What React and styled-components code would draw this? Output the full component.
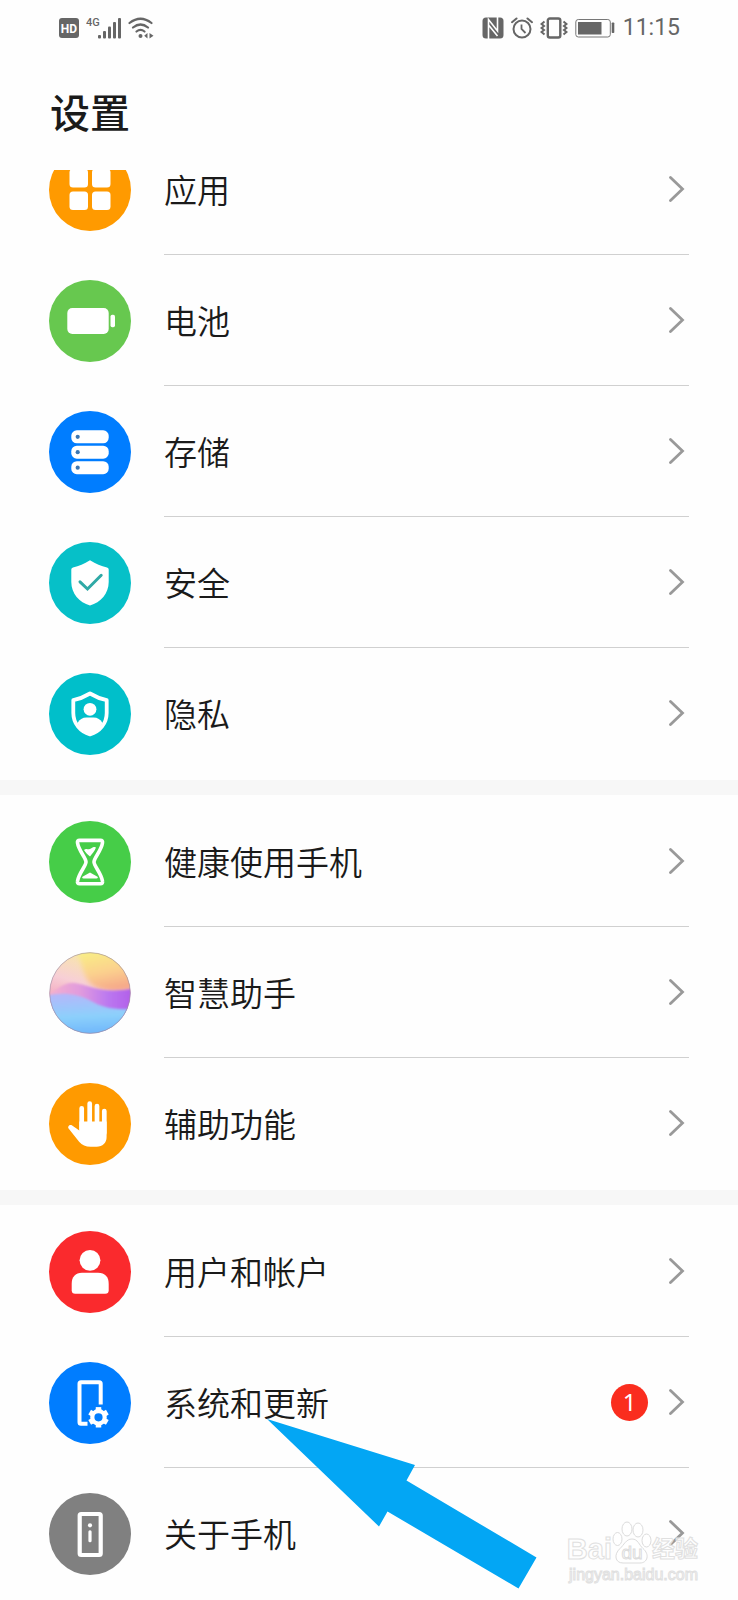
import React from 'react'
import styled, { createGlobalStyle } from 'styled-components'

const GlobalStyle = createGlobalStyle`
  * {
    box-sizing: border-box;
  }
  body {
    margin: 0;
    background: #fefefe;
    font-family: 'Noto Sans CJK SC', 'Noto Sans', sans-serif;
    color: #1a1a1a;
  }
`

const Page = styled.div`
  overflow: hidden;
`

const StatusBar = styled.div`
  display: flex;
  justify-content: space-between;
  align-items: center;
  height: 56px;
  padding: 0 58px;
  color: #666;
`

const StatusGroup = styled.div`
  display: flex;
  align-items: center;
  gap: ${props => props.gap}px;
`

const Clock = styled.time`
  font-family: Roboto, sans-serif;
  font-size: 23px;
  line-height: 24px;
`

const Title = styled.h1`
  margin: 0;
  height: 114px;
  padding: 25px 50px 0;
  font-size: 40px;
  line-height: 60px;
  font-weight: 500;
`

// the list is scrolled a little, so its first row is cut by the header
const ScrollArea = styled.main`
  overflow: hidden;
`

const Scrolled = styled.div`
  margin-top: -47px;
`

const Group = styled.ul`
  list-style: none;
  margin: 0;
  padding: 1px 0;

  & + & {
    border-top: 15px solid #f7f7f7;
  }
`

const Item = styled.li`
  position: relative;
`

const Row = styled.a`
  display: flex;
  align-items: center;
  gap: 33px;
  height: 131px;
  padding: 0 49px;
  color: inherit;
  text-decoration: none;
`

const Body = styled.div`
  flex: 1;
  display: flex;
  align-items: center;
  height: 100%;
  padding-right: 4px;
  border-bottom: 1px solid ${props => (props.$last ? 'transparent' : '#d0d0d0')};
`

const Label = styled.span`
  flex: 1;
  font-size: 33px;
  line-height: 36px;
  font-weight: 350;
`

const Badge = styled.span`
  display: flex;
  justify-content: center;
  align-items: center;
  width: 37px;
  height: 37px;
  margin-right: 21px;
  border-radius: 50%;
  background: #fa2d1e;
  color: white;
  font-family: 'Noto Sans', sans-serif;
  font-size: 24px;
  line-height: 32px;
`

const Pointer = styled.svg`
  position: absolute;
  z-index: 2;
  left: 266px;
  top: 81px;
`

const Watermark = styled.div`
  position: absolute;
  z-index: 1;
  right: 40px;
  bottom: 14px;
  color: rgba(255, 255, 255, 0.6);
  -webkit-text-stroke: 1px #e0e0e0;
`

const Brand = styled.div`
  display: flex;
  align-items: flex-end;
  font-family: 'Liberation Sans', 'Noto Sans CJK SC', sans-serif;
  line-height: 32px;
`

const BrandName = styled.span`
  font-size: ${props => (props.$cjk ? 23 : 29)}px;
  font-weight: bold;
`

const Site = styled.div`
  font-family: 'Liberation Sans', sans-serif;
  font-size: 16px;
  line-height: 20px;
  text-align: right;
`

const Disc = ({ color, children }) => (
  <svg width="82" height="82" viewBox="0 0 82 82" fill="#fff" aria-hidden="true">
    <circle cx="41" cy="41" r="41" fill={color} />
    {children}
  </svg>
)

const AppsIcon = () => (
  <Disc color="#ff9a00">
    <rect x="20.5" y="20" width="18.5" height="18.5" rx="3.5" />
    <rect x="43" y="20" width="18.5" height="18.5" rx="3.5" />
    <rect x="20.5" y="42.5" width="18.5" height="18.5" rx="3.5" />
    <rect x="43" y="42.5" width="18.5" height="18.5" rx="3.5" />
  </Disc>
)

const BatteryIcon = () => (
  <Disc color="#67c84f">
    <rect x="18.3" y="28" width="41.4" height="26" rx="5" />
    <rect x="61.5" y="34.7" width="4.5" height="12.6" rx="1.8" />
  </Disc>
)

const StorageIcon = () => (
  <Disc color="#007dff">
    {[19.3, 34.7, 50.2].map(y => (
      <g key={y}>
        <rect x="22.3" y={y} width="37.4" height="13" rx="5.5" />
        <circle cx="28.7" cy={y + 6.5} r="2.1" fill="#3a76b4" />
      </g>
    ))}
  </Disc>
)

const SecurityIcon = () => (
  <Disc color="#06c0c8">
    <path d="M41 18.3C47 21.9 52 24.3 58 25.5Q59.7 25.9 59.7 27.5V40C59.7 51.5 51.7 60.5 41 63.4 30.3 60.5 22.3 51.5 22.3 40V27.5Q22.3 25.9 24 25.5C30 24.3 35 21.9 41 18.3z" />
    <path
      d="M31 39.8L38.5 47 52.2 33.3"
      fill="none"
      stroke="#2fa9a6"
      strokeWidth="3"
      strokeLinecap="round"
    />
  </Disc>
)

const PrivacyIcon = () => (
  <Disc color="#00bfca">
    <path
      d="M41 20.5C46.5 23.8 51.5 25.9 57.7 27.2V40C57.7 50.5 50.7 58.5 41 61.4 31.3 58.5 24.3 50.5 24.3 40V27.2C30.5 25.9 35.5 23.8 41 20.5z"
      fill="none"
      stroke="#fff"
      strokeWidth="3.8"
      strokeLinejoin="round"
    />
    <circle cx="41" cy="36.3" r="6.4" />
    <path d="M28.5 50q3-5.5 9-5.5h7q6 0 9 5.5-4.5 8.5-12.5 11.5-8-3-12.5-11.5z" />
  </Disc>
)

const HourglassIcon = () => (
  <Disc color="#46cd48">
    <path
      d="M30.5 19.4h21q2.400 0 2 2.400C52.5 29.5 45 37 45 41s7.5 11.5 8.5 19.2q.4 2.5-2 2.5h-21q-2.4 0-2-2.5C29.5 52.5 37 45 37 41s-7.5-11.5-8.5-19.2q-.4-2.4 2-2.4z"
      fill="none"
      stroke="#fff"
      strokeWidth="3.6"
    />
    <path d="M35 29c3-2.5 4 .5 7-1.5s4-1.5 5-1c-1.5 4-4 6.5-6 9-2.5-2-4.5-4-6-6.5z" />
    <path d="M41 51.5l7.5 4.3q1 1.7-1 1.7h-13q-2 0-1-1.7z" />
  </Disc>
)

const AssistantIcon = () => (
  <svg width="82" height="82" viewBox="0 0 82 82" aria-hidden="true">
    <defs>
      <clipPath id="orb">
        <circle cx="41" cy="41" r="40.5" />
      </clipPath>
      <filter id="orbSoft">
        <feGaussianBlur stdDeviation="2.5" />
      </filter>
      <filter id="orbEdge">
        <feGaussianBlur stdDeviation="0.8" />
      </filter>
      <linearGradient id="orbPink" x1="0.4" y1="0" x2="0.2" y2="0.7">
        <stop offset="0" stopColor="#f8e7a8" />
        <stop offset="0.5" stopColor="#f7cfd6" />
        <stop offset="1" stopColor="#f29cb8" />
      </linearGradient>
      <linearGradient id="orbGold" x1="0.4" y1="0" x2="0.7" y2="1">
        <stop offset="0" stopColor="#f8f284" />
        <stop offset="0.55" stopColor="#fbd08e" />
        <stop offset="1" stopColor="#f5a088" />
      </linearGradient>
      <linearGradient id="orbViolet" x1="0" y1="0" x2="1" y2="0">
        <stop offset="0" stopColor="#f6b4cc" />
        <stop offset="0.4" stopColor="#e09ade" />
        <stop offset="0.7" stopColor="#bb78f0" />
        <stop offset="1" stopColor="#b15ce8" />
      </linearGradient>
      <linearGradient id="orbBlue" x1="0.4" y1="0" x2="0.5" y2="1">
        <stop offset="0" stopColor="#b4b8fa" />
        <stop offset="0.45" stopColor="#8cd0fb" />
        <stop offset="1" stopColor="#5fa8fb" />
      </linearGradient>
    </defs>
    <g clipPath="url(#orb)">
      <rect width="82" height="82" fill="url(#orbPink)" />
      <path
        d="M24-6C34 6 32 20 40 30s26 12 50 6V-6z"
        fill="url(#orbGold)"
        filter="url(#orbSoft)"
      />
      <path
        d="M-4 44C8 38 14 30 25 31c16 2 28 12 61 5v30H-4z"
        fill="url(#orbViolet)"
        filter="url(#orbEdge)"
      />
      <path
        d="M-8 46c14-6 34-6 50 3 12 7 26 10 50 7v36H-8z"
        fill="url(#orbBlue)"
        filter="url(#orbEdge)"
      />
    </g>
    <circle cx="41" cy="41" r="40.3" fill="none" stroke="#9a8aa0" strokeOpacity="0.6" />
  </svg>
)

const HandIcon = () => (
  <Disc color="#ff9a00">
    <g stroke="#fff" strokeWidth="4.7" strokeLinecap="round">
      <path d="M32.7 25.3V46M40.7 20.5V46M48 23V46M55.3 28V50" />
    </g>
    <path d="M30.3 38.5h27.3V54c0 6-4 9.7-10 9.7h-6c-5 0-8.5-1.5-11.5-5L19.6 45.5c-1.3-1.8.9-4.4 3.2-3.2l7.5 5.2z" />
  </Disc>
)

const UserIcon = () => (
  <Disc color="#fa2a2d">
    <circle cx="41" cy="29.3" r="10.4" />
    <path d="M33 41.8h16c7 0 10.7 4 10.7 11v6.5q0 3.5-3.5 3.5H26.2q-3.5 0-3.5-3.5v-6.5c0-7 3.7-11 10.3-11z" />
  </Disc>
)

const SystemIcon = () => (
  <Disc color="#007dff">
    <path
      d="M38.5 61.8H32q-1.5 0-1.5-1.5V21.7q0-1.5 1.5-1.5h18.2q1.5 0 1.5 1.5V42.5"
      fill="none"
      stroke="#fff"
      strokeWidth="4"
    />
    <circle cx="49.5" cy="55.3" r="6.2" fill="none" stroke="#fff" strokeWidth="4.2" />
    <g stroke="#fff" strokeWidth="5.5">
      {[0, 60, 120, 180, 240, 300].map(angle => (
        <path key={angle} d="M49.5 48.8v-3.7" transform={`rotate(${angle} 49.5 55.3)`} />
      ))}
    </g>
  </Disc>
)

const AboutIcon = () => (
  <Disc color="#808080">
    <rect
      x="30.7"
      y="21"
      width="21"
      height="41"
      rx="1.5"
      fill="none"
      stroke="#fff"
      strokeWidth="4.2"
    />
    <circle cx="41" cy="32.3" r="2.1" />
    <rect x="39.4" y="37.3" width="3.2" height="12" rx="1.5" />
  </Disc>
)

const Chevron = () => (
  <svg width="16" height="28" viewBox="0 0 16 28" fill="none" aria-hidden="true">
    <path d="M1.5 2.5L13.500 14 1.5 25.5" stroke="#999" strokeWidth="2.8" strokeLinecap="round" />
  </svg>
)

const HdIcon = () => (
  <svg width="22" height="22" viewBox="0 0 22 22" aria-hidden="true">
    <rect x="1" y="1" width="20" height="20" rx="3" fill="#666" />
    <text
      x="11"
      y="15.5"
      fill="#fff"
      fontSize="12"
      fontWeight="bold"
      fontFamily="Roboto, sans-serif"
      textAnchor="middle"
    >
      HD
    </text>
  </svg>
)

const SignalIcon = () => (
  <svg width="36" height="22" viewBox="0 0 36 22" fill="#666" aria-hidden="true">
    <text x="0" y="9" fontSize="11" fontWeight="500" fontFamily="Roboto, sans-serif">
      4G
    </text>
    <rect x="12" y="18" width="3" height="3.5" rx="1" />
    <rect x="17" y="14" width="3" height="7.5" rx="1" />
    <rect x="22" y="9.5" width="3" height="12" rx="1" />
    <rect x="27" y="5" width="3" height="16.5" rx="1" />
    <rect x="32" y="1" width="3" height="20.5" rx="1" />
  </svg>
)

const WifiIcon = () => (
  <svg width="26" height="22" viewBox="0 0 26 22" fill="none" aria-hidden="true">
    <g stroke="#666" strokeWidth="2.2" strokeLinecap="round">
      <path d="M1.5 6q11-8.5 22 0M5 10.5q7.5-6 15 0M8.5 14.5q4-3.3 8 0" />
    </g>
    <circle cx="12.5" cy="19" r="2" fill="#666" />
    <path d="M19.5 16v5.5l-3.3-2.7zM21.5 16v5.5l4-2.7z" fill="#666" />
  </svg>
)

const NfcIcon = () => (
  <svg width="22" height="22" viewBox="0 0 22 22" aria-hidden="true">
    <rect x="0.5" y="0.5" width="21" height="21" rx="3.5" fill="#666" />
    <path
      d="M6.5 22V2.5L15.5 14V0M6.5 8L15.5 19"
      fill="none"
      stroke="#fff"
      strokeWidth="1.6"
    />
  </svg>
)

const AlarmIcon = () => (
  <svg width="22" height="22" viewBox="0 0 22 22" fill="none" stroke="#666" aria-hidden="true">
    <circle cx="11" cy="12" r="8.5" strokeWidth="2" />
    <path d="M10.5 7.5V12l4 4" strokeWidth="1.8" />
    <path d="M1 5.2L5.5 1.5M21 5.2L16.5 1.5" strokeWidth="2" strokeLinecap="round" />
  </svg>
)

const VibrateIcon = () => (
  <svg width="28" height="22" viewBox="0 0 28 22" fill="none" stroke="#666" aria-hidden="true">
    <rect x="7.8" y="1.5" width="12.5" height="19" rx="2" strokeWidth="2.4" />
    <path
      d="M4.5 4.5L1.5 7l2.5 2-2.5 2 2.5 2-2.5 2 3 2.5M23.5 4.5l3 2.5-2.5 2 2.5 2-2.5 2 2.5 2-3 2.5"
      strokeWidth="2"
    />
  </svg>
)

const PowerIcon = () => (
  <svg width="41" height="22" viewBox="0 0 41 22" aria-hidden="true">
    <rect x="0.8" y="2.5" width="34.5" height="17.5" rx="2.5" fill="none" stroke="#777" />
    <rect x="3" y="5" width="23.5" height="12.5" fill="#666" />
    <rect x="36.7" y="5.5" width="2.6" height="10.5" rx="0.8" fill="#666" />
  </svg>
)

const PawIcon = () => (
  <svg width="40" height="44" viewBox="0 0 40 44" aria-hidden="true">
    <g fill="#fff" fillOpacity="0.6" stroke="#dcdcdc">
      <ellipse cx="5.5" cy="18" rx="4.5" ry="6.5" />
      <ellipse cx="15" cy="8" rx="5" ry="7" />
      <ellipse cx="26" cy="9" rx="5" ry="7" />
      <ellipse cx="34.5" cy="19.5" rx="4.5" ry="6.5" />
      <path d="M20 18c6 0 7 6 11 9.5 7 6 4.5 14.5-3 14.5H11c-8 0-9.5-8.5-3-14.5C12 24 14 18 20 18z" />
    </g>
    <text
      x="20"
      y="38"
      fill="#fff"
      stroke="#dcdcdc"
      fontSize="19"
      fontFamily="Liberation Sans, sans-serif"
      textAnchor="middle"
    >
      du
    </text>
  </svg>
)

const groups = [
  [
    { label: '应用', Icon: AppsIcon },
    { label: '电池', Icon: BatteryIcon },
    { label: '存储', Icon: StorageIcon },
    { label: '安全', Icon: SecurityIcon },
    { label: '隐私', Icon: PrivacyIcon }
  ],
  [
    { label: '健康使用手机', Icon: HourglassIcon },
    { label: '智慧助手', Icon: AssistantIcon },
    { label: '辅助功能', Icon: HandIcon }
  ],
  [
    { label: '用户和帐户', Icon: UserIcon },
    { label: '系统和更新', Icon: SystemIcon, badge: 1, pointed: true },
    { label: '关于手机', Icon: AboutIcon, marked: true }
  ]
]

const SettingsItem = ({ item, last }) => {
  const { label, Icon, badge, pointed, marked } = item
  return (
    <Item>
      <Row href="#">
        <Icon />
        <Body $last={last}>
          <Label>{label}</Label>
          {badge && <Badge>{badge}</Badge>}
          <Chevron />
        </Body>
      </Row>
      {pointed && (
        <Pointer width="272" height="172" viewBox="0 0 272 172" aria-hidden="true">
          <path
            d="M1 1L149 47 140.5 62.5 270.5 139.5 252.5 170.5 121.5 93.5 113 108.5z"
            fill="#03a6f4"
          />
        </Pointer>
      )}
      {marked && (
        <Watermark>
          <Brand>
            <BrandName>Bai</BrandName>
            <PawIcon />
            <BrandName $cjk>经验</BrandName>
          </Brand>
          <Site>jingyan.baidu.com</Site>
        </Watermark>
      )}
    </Item>
  )
}

const App = () => {
  return (
    <Page>
      <GlobalStyle />
      <header>
        <StatusBar>
          <StatusGroup gap={6}>
            <HdIcon />
            <SignalIcon />
            <WifiIcon />
          </StatusGroup>
          <StatusGroup gap={7}>
            <NfcIcon />
            <AlarmIcon />
            <VibrateIcon />
            <PowerIcon />
            <Clock>11:15</Clock>
          </StatusGroup>
        </StatusBar>
        <Title>设置</Title>
      </header>
      <ScrollArea>
        <Scrolled>
          {groups.map(items => (
            <Group key={items[0].label}>
              {items.map((item, i) => (
                <SettingsItem key={item.label} item={item} last={i === items.length - 1} />
              ))}
            </Group>
          ))}
        </Scrolled>
      </ScrollArea>
    </Page>
  )
}

export default App
